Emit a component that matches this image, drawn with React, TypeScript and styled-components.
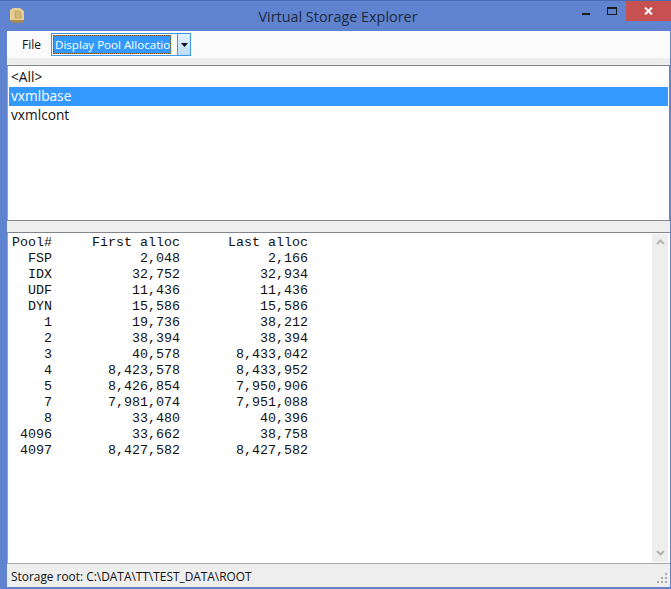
import React from 'react'
import styled, { createGlobalStyle } from 'styled-components'

const GlobalStyle = createGlobalStyle`
  html, body {
    margin: 0;
    padding: 0;
    background: #5f83cf;
  }
`

const Window = styled.div`
  width: 671px;
  height: 589px;
  box-sizing: border-box;
  display: flex;
  flex-direction: column;
  background: #5f83cf;
  border-top: 1px solid #4a6cb4;
  overflow: hidden;
  font-family: 'Open Sans', 'Noto Sans', sans-serif;
`

const TitleBar = styled.div`
  height: 30px;
  flex: none;
  position: relative;
  display: flex;
  align-items: center;
  justify-content: center;
  padding-left: 5px;
`

const Title = styled.div`
  font-size: 14.4px;
  color: #1c2a40;
  padding-top: 1px;
`

const AppIcon = styled.svg`
  position: absolute;
  left: 9px;
  top: 7px;
`

const WindowButtons = styled.div`
  position: absolute;
  right: 0;
  top: 0;
  display: flex;
  align-items: flex-start;
`

const CaptionButton = styled.div`
  width: 27px;
  height: 20px;
  display: flex;
  align-items: center;
  justify-content: center;
`

const CloseButton = styled(CaptionButton)`
  width: 45px;
  background: #c75050;
`

const Body = styled.div`
  flex: 1;
  margin: 0 1px 2px 7px;
  display: flex;
  flex-direction: column;
  min-height: 0;
`

const Toolbar = styled.div`
  height: 34px;
  flex: none;
  box-sizing: border-box;
  padding: 2px 0 9px 15px;
  display: flex;
  align-items: center;
  gap: 10px;
  background: linear-gradient(#fbfbfb 0, #fbfbfb 27px, #eeeeee 27px, #eeeeee 100%);
`

const MenuLabel = styled.span`
  font-size: 12px;
  color: #111;
`

const Combo = styled.div`
  width: 140px;
  height: 23px;
  box-sizing: border-box;
  display: flex;
  justify-content: space-between;
  border: 1px solid #3c97e8;
  background: #fff;
`

const ComboValue = styled.div`
  width: 118px;
  box-sizing: border-box;
  margin: 1px 0 1px 1px;
  outline: 1px dotted #8a4a00;
  outline-offset: -1px;
  background: #3399ff;
  color: #fff;
  font-size: 11.6px;
  line-height: 19px;
  padding-left: 2px;
  white-space: nowrap;
  overflow: hidden;
`

const ComboArrow = styled.div`
  width: 12px;
  flex: none;
  display: flex;
  align-items: center;
  justify-content: center;
  border-left: 1px solid #3c97e8;
  background: linear-gradient(#e4f2fd, #bcdcf8);
`

const ListPanel = styled.div`
  height: 156px;
  flex: none;
  box-sizing: border-box;
  border-top: 1px solid #82868c;
  border-bottom: 1px solid #82868c;
  border-left: 1px solid #a0a4a8;
  border-right: 1px solid #82868c;
  background: #fff;
  padding: 2px 1px 0 1px;
`

const ListRow = styled.div<{ $selected?: boolean }>`
  height: 19px;
  line-height: 18px;
  font-size: 13.7px;
  padding-left: 2px;
  color: ${({ $selected }) => ($selected ? '#fff' : '#111')};
  background: ${({ $selected }) => ($selected ? '#3399ff' : 'transparent')};
`

const Splitter = styled.div`
  height: 11px;
  flex: none;
  background: #eeeeee;
`

const OutputPanel = styled.div`
  flex: 1;
  min-height: 0;
  display: flex;
  box-sizing: border-box;
  border-top: 1px solid #82868c;
  border-left: 1px solid #a0a4a8;
  border-bottom: 1px solid #a8a8a8;
  background: #fff;
  padding: 1px 0;
`

const Output = styled.pre`
  flex: 1;
  margin: 0;
  padding: 1px 0 0 4px;
  font-family: 'Liberation Mono', 'Courier New', monospace;
  font-size: 13.33px;
  line-height: 16px;
  color: #111;
`

const ScrollBar = styled.div`
  width: 16px;
  flex: none;
  margin-right: 2px;
  display: flex;
  flex-direction: column;
  justify-content: space-between;
  align-items: center;
  background: #eeeeee;
  padding: 5px 0 6px;
`

const StatusBar = styled.div`
  height: 23px;
  flex: none;
  position: relative;
  display: flex;
  align-items: center;
  padding-left: 4px;
  background: #eeeeee;
  font-size: 11.9px;
  color: #111;
`

const Grip = styled.svg`
  position: absolute;
  right: 2px;
  bottom: 3px;
`

const COLUMNS = ['Pool#', 'First alloc', 'Last alloc']

const ROWS: [string, string, string][] = [
  ['FSP', '2,048', '2,166'],
  ['IDX', '32,752', '32,934'],
  ['UDF', '11,436', '11,436'],
  ['DYN', '15,586', '15,586'],
  ['1', '19,736', '38,212'],
  ['2', '38,394', '38,394'],
  ['3', '40,578', '8,433,042'],
  ['4', '8,423,578', '8,433,952'],
  ['5', '8,426,854', '7,950,906'],
  ['7', '7,981,074', '7,951,088'],
  ['8', '33,480', '40,396'],
  ['4096', '33,662', '38,758'],
  ['4097', '8,427,582', '8,427,582'],
]

const formatRow = ([pool, first, last]: string[]) =>
  pool.padStart(5) + first.padStart(16) + last.padStart(16)

const report = [formatRow(COLUMNS), ...ROWS.map(formatRow)].join('\n')

const STORES = ['<All>', 'vxmlbase', 'vxmlcont']

export default function App() {
  return (
    <Window>
      <GlobalStyle />
      <TitleBar>
        <AppIcon width="17" height="16" viewBox="0 0 17 16">
          <path d="M1 2 L4 0 H11 L15 3 V12 L1 12 Z" fill="#e6cd92" />
          <path d="M1 12 H15 V14 Q8 16 2 14 Z" fill="#a98a4e" />
          <path d="M6 3 H10 L12 5 V10 H6 Z" fill="#d4b878" stroke="#c2a666" />
        </AppIcon>
        <Title>Virtual Storage Explorer</Title>
        <WindowButtons>
          <CaptionButton>
            <svg width="10" height="10" viewBox="0 0 10 10">
              <rect x="1" y="7" width="8" height="2" fill="#1c1c1c" />
            </svg>
          </CaptionButton>
          <CaptionButton>
            <svg width="11" height="9" viewBox="0 0 11 9">
              <rect x="0.5" y="0.5" width="9" height="7" fill="none" stroke="#1c1c1c" />
              <rect x="0" y="0" width="10" height="2" fill="#1c1c1c" />
            </svg>
          </CaptionButton>
          <CloseButton>
            <svg width="9" height="8" viewBox="0 0 9 8">
              <path d="M1 0.5 L8 7.5 M8 0.5 L1 7.5" stroke="#fff" strokeWidth="2" />
            </svg>
          </CloseButton>
        </WindowButtons>
      </TitleBar>
      <Body>
        <Toolbar>
          <MenuLabel>File</MenuLabel>
          <Combo>
            <ComboValue>Display Pool Allocatio</ComboValue>
            <ComboArrow>
              <svg width="7" height="4" viewBox="0 0 7 4">
                <path d="M0 0 H7 L3.5 4 Z" fill="#111" />
              </svg>
            </ComboArrow>
          </Combo>
        </Toolbar>
        <ListPanel>
          {STORES.map((name) => (
            <ListRow key={name} $selected={name === 'vxmlbase'}>
              {name}
            </ListRow>
          ))}
        </ListPanel>
        <Splitter />
        <OutputPanel>
          <Output>{report}</Output>
          <ScrollBar>
            <svg width="9" height="6" viewBox="0 0 9 6">
              <path d="M1 5 L4.5 1.5 L8 5" fill="none" stroke="#b4b4b4" strokeWidth="2" />
            </svg>
            <svg width="9" height="6" viewBox="0 0 9 6">
              <path d="M1 1 L4.5 4.5 L8 1" fill="none" stroke="#b4b4b4" strokeWidth="2" />
            </svg>
          </ScrollBar>
        </OutputPanel>
        <StatusBar>
          Storage root: C:\DATA\TT\TEST_DATA\ROOT
          <Grip width="11" height="11" viewBox="0 0 11 11" fill="#a8a8a8">
            <rect x="8" y="0" width="2" height="2" />
            <rect x="4" y="4" width="2" height="2" />
            <rect x="8" y="4" width="2" height="2" />
            <rect x="0" y="8" width="2" height="2" />
            <rect x="4" y="8" width="2" height="2" />
            <rect x="8" y="8" width="2" height="2" />
          </Grip>
        </StatusBar>
      </Body>
    </Window>
  )
}
